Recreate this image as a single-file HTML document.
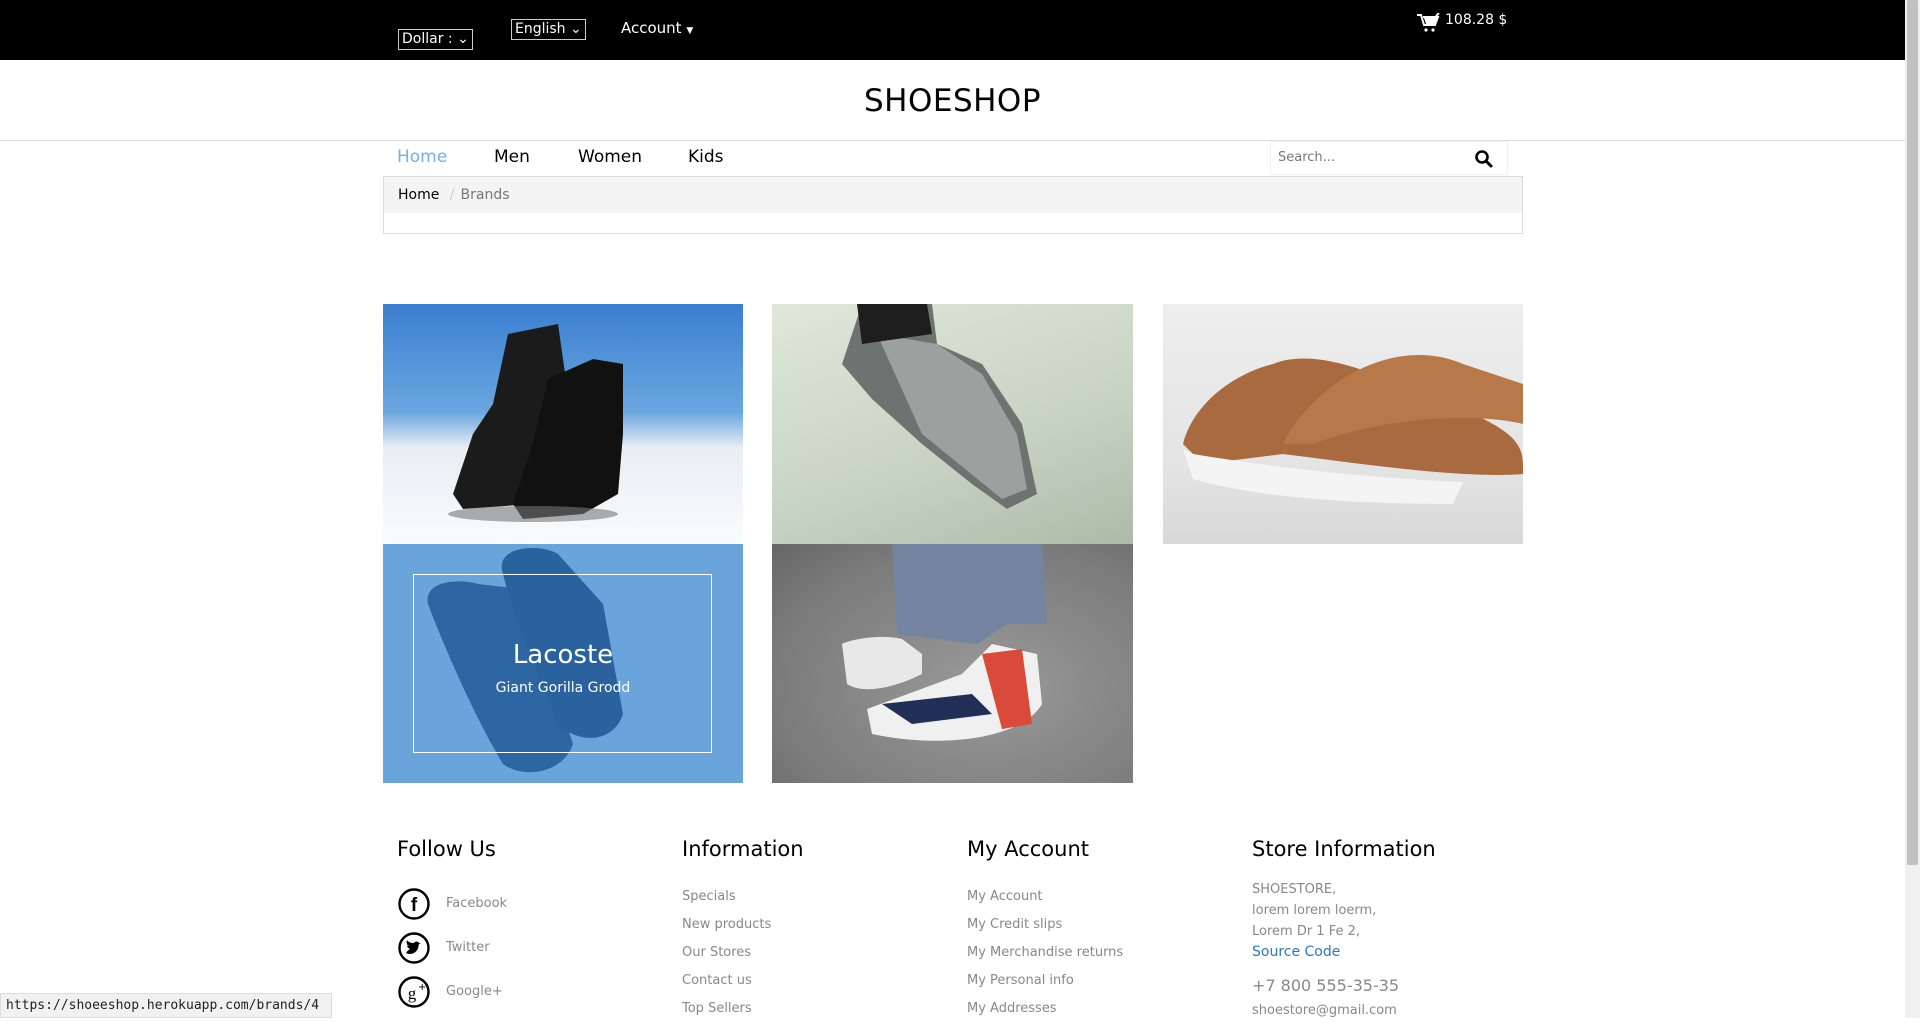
<!DOCTYPE html>
<html><head><meta charset="utf-8">
<style>
*{box-sizing:border-box;margin:0;padding:0}
body{width:1920px;height:1018px;overflow:hidden;background:#fff;font-family:"DejaVu Sans","Liberation Sans",sans-serif;position:relative;color:#000}
.a{position:absolute}
.top{left:0;top:0;width:1905px;height:60px;background:#000;color:#fff}
.sel{border:1px solid #ccc;color:#fff;font-size:14px;padding:0 3px;height:21px;line-height:19px;white-space:nowrap;overflow:hidden}
.nav{font-size:17px}
.fh{font-size:21px;top:837px}
.fl{font-size:13px;color:#888}
</style></head><body>
<div class="a top">
  <div class="a sel" style="left:398px;top:29px;width:75px">Dollar : ⌄</div>
  <div class="a sel" style="left:511px;top:19px;width:75px">English ⌄</div>
  <div class="a" style="left:621px;top:19px;font-size:15px">Account <span style="font-size:9px">▼</span></div>
  <svg class="a" style="left:1416px;top:13px" width="24" height="20" viewBox="0 0 24 20"><path d="M1 2h4l3 10h11l3-8H7" fill="none" stroke="#fff" stroke-width="2"/><path d="M8 5h13l-2 6H10z" fill="#fff"/><circle cx="10" cy="17" r="1.6" fill="#fff"/><circle cx="17" cy="17" r="1.6" fill="#fff"/><path d="M20 3l3-3" stroke="#fff" stroke-width="2"/></svg>
  <div class="a" style="left:1445px;top:12px;font-size:14px">108.28 $</div>
</div>
<div class="a" style="left:0;top:83px;width:1905px;text-align:center;font-size:31px;letter-spacing:.5px">SHOESHOP</div>
<div class="a" style="left:0;top:140px;width:1905px;height:1px;background:#ddd"></div>
<div class="a nav" style="left:397px;top:147px;color:#6fb0e6">Home</div>
<div class="a nav" style="left:494px;top:147px">Men</div>
<div class="a nav" style="left:578px;top:147px">Women</div>
<div class="a nav" style="left:688px;top:147px">Kids</div>
<div class="a" style="left:1270px;top:141px;width:238px;height:34px;border:1px solid #f0f0f0"></div>
<div class="a" style="left:1278px;top:150px;font-size:13px;color:#777">Search...</div>
<svg class="a" style="left:1474px;top:149px" width="20" height="20" viewBox="0 0 20 20"><circle cx="8" cy="8" r="5.5" fill="none" stroke="#000" stroke-width="2.6"/><path d="M12 12l5 5" stroke="#000" stroke-width="3" stroke-linecap="round"/></svg>
<div class="a" style="left:383px;top:176px;width:1140px;height:58px;border:1px solid #ddd"></div>
<div class="a" style="left:384px;top:177px;width:1138px;height:36px;background:#f4f4f4"></div>
<div class="a" style="left:398px;top:187px;font-size:14px">Home <span style="color:#ccc;margin:0 6px">/</span><span style="color:#777">Brands</span></div>

<div class="a" style="left:383px;top:304px;width:360px;height:240px;background:linear-gradient(#3a7fd0 0%,#6aa6e0 45%,#e9eef4 60%,#fafbfc 100%)">
  <svg width="360" height="240"><path d="M70 190 L90 130 L110 100 L125 30 L175 20 L185 90 L200 130 L195 175 L150 200 L80 205z" fill="#1b1b1b"/><path d="M130 200 L150 140 L165 75 L210 55 L240 60 L240 130 L235 190 L200 210 L140 215z" fill="#111"/><ellipse cx="150" cy="210" rx="85" ry="8" fill="#777" opacity=".6"/></svg>
</div>
<div class="a" style="left:772px;top:304px;width:361px;height:240px;background:linear-gradient(160deg,#dfe8da,#c7d3c2 60%,#aebaa8)">
  <svg width="361" height="240"><path d="M90 0 L160 0 L165 40 L210 60 L250 120 L265 190 L235 205 L200 180 L150 140 L100 95 L70 60z" fill="#6c7371"/><path d="M105 30 L165 40 L210 70 L245 130 L255 185 L230 195 L150 130z" fill="#9aa2a0"/><path d="M85 0h70l5 30l-70 10z" fill="#1e1e1e"/></svg>
</div>
<div class="a" style="left:1163px;top:304px;width:360px;height:240px;background:linear-gradient(#eeeeee,#e3e3e3 70%,#d8d8d8)">
  <svg width="360" height="240"><path d="M20 140 C30 100 70 70 110 60 C160 40 230 80 290 100 C330 120 360 130 360 160 L360 170 C300 175 200 160 120 150 L40 160z" fill="#a86a3e"/><path d="M20 145 L30 175 C100 195 200 200 290 200 L300 178 C220 175 120 165 30 150z" fill="#f4f4f4"/><path d="M120 140 C150 80 230 30 300 60 L360 80 L360 120 C320 110 230 110 150 140z" fill="#b8794a"/></svg>
</div>
<div class="a" style="left:383px;top:544px;width:360px;height:239px;background:#69a5db;overflow:hidden">
  <svg class="a" style="left:0;top:0" width="360" height="239"><path d="M45 60 C40 35 80 35 95 40 L140 45 L190 200 C180 230 140 235 120 220 C90 170 60 100 45 60z" fill="#2d67a3"/><path d="M120 30 C110 0 160 0 175 10 L220 60 L240 170 C230 200 195 200 175 180 C150 120 130 70 120 30z" fill="#2a62a0"/></svg>
  <div class="a" style="left:30px;top:30px;width:299px;height:179px;border:1px solid #fff"></div>
  <div class="a" style="left:0;top:96px;width:360px;text-align:center;color:#fff;font-size:26px">Lacoste</div>
  <div class="a" style="left:0;top:136px;width:360px;text-align:center;color:#fff;font-size:14px">Giant Gorilla Grodd</div>
</div>
<div class="a" style="left:772px;top:544px;width:361px;height:239px;background:radial-gradient(ellipse at 60% 60%,#9a9a9a,#7b7b7b 70%,#666)">
  <svg width="361" height="239"><path d="M120 0h150l5 80l-40 0l-30 20l-80 -10z" fill="#7383a0"/><path d="M70 100 C80 95 110 90 130 95 L150 110 L150 130 C120 145 90 150 75 140z" fill="#e8e8e8"/><path d="M95 165 L190 130 L220 100 L265 110 L270 160 C250 195 170 205 100 190z" fill="#f0f0f0"/><path d="M210 110 L250 105 L260 180 L230 185z" fill="#d94a3a"/><path d="M110 160 L200 150 L220 170 L140 180z" fill="#1f2f55"/></svg>
</div>

<div class="a fh" style="left:397px">Follow Us</div>
<div class="a fh" style="left:682px">Information</div>
<div class="a fh" style="left:967px">My Account</div>
<div class="a fh" style="left:1252px">Store Information</div>

<svg class="a" style="left:398px;top:888px" width="32" height="32"><circle cx="16" cy="16" r="14.5" fill="none" stroke="#000" stroke-width="2.4"/><text x="16" y="23" text-anchor="middle" font-size="19" font-weight="bold" font-family="Liberation Sans">f</text></svg>
<svg class="a" style="left:398px;top:932px" width="32" height="32"><circle cx="16" cy="16" r="14.5" fill="none" stroke="#000" stroke-width="2.4"/><path d="M8 21c4 2 10 1 12-5l1-4l2-1l-2 0c-1-2-4-2-5 0c-3 0-6-1-7-3c-1 3 0 5 2 6c-1 0-2 0-2-1c0 2 1 3 3 4c-1 1-2 1-4 4z" fill="#000"/></svg>
<svg class="a" style="left:398px;top:976px" width="32" height="32"><circle cx="16" cy="16" r="14.5" fill="none" stroke="#000" stroke-width="2.4"/><text x="14" y="23" text-anchor="middle" font-size="17" font-family="Liberation Serif">g</text><text x="20" y="14" font-size="10">+</text></svg>
<div class="a fl" style="left:446px;top:896px">Facebook</div>
<div class="a fl" style="left:446px;top:940px">Twitter</div>
<div class="a fl" style="left:446px;top:984px">Google+</div>

<div class="a fl" style="left:682px;top:883px;line-height:28px">Specials<br>New products<br>Our Stores<br>Contact us<br>Top Sellers</div>
<div class="a fl" style="left:967px;top:883px;line-height:28px">My Account<br>My Credit slips<br>My Merchandise returns<br>My Personal info<br>My Addresses</div>
<div class="a fl" style="left:1252px;top:879px;line-height:21px">SHOESTORE,<br>lorem lorem loerm,<br>Lorem Dr 1 Fe 2,<br><span style="color:#2a7ac0;font-size:14px">Source Code</span></div>
<div class="a" style="left:1252px;top:976px;font-size:16px;color:#888">+7 800 555-35-35</div>
<div class="a fl" style="left:1252px;top:1003px">shoestore@gmail.com</div>

<div class="a" style="left:1905px;top:0;width:15px;height:1018px;background:#f0f0f0"></div>
<div class="a" style="left:1907px;top:0;width:11px;height:865px;background:#c1c1c1;border-radius:2px"></div>
<div class="a" style="left:0;top:993px;width:332px;height:25px;background:#f1f1f1;border:1px solid #ddd;font-family:'DejaVu Sans Mono','Liberation Mono',monospace;font-size:13px;color:#222;padding:4px 5px">https://shoeeshop.herokuapp.com/brands/4</div>
</body></html>
